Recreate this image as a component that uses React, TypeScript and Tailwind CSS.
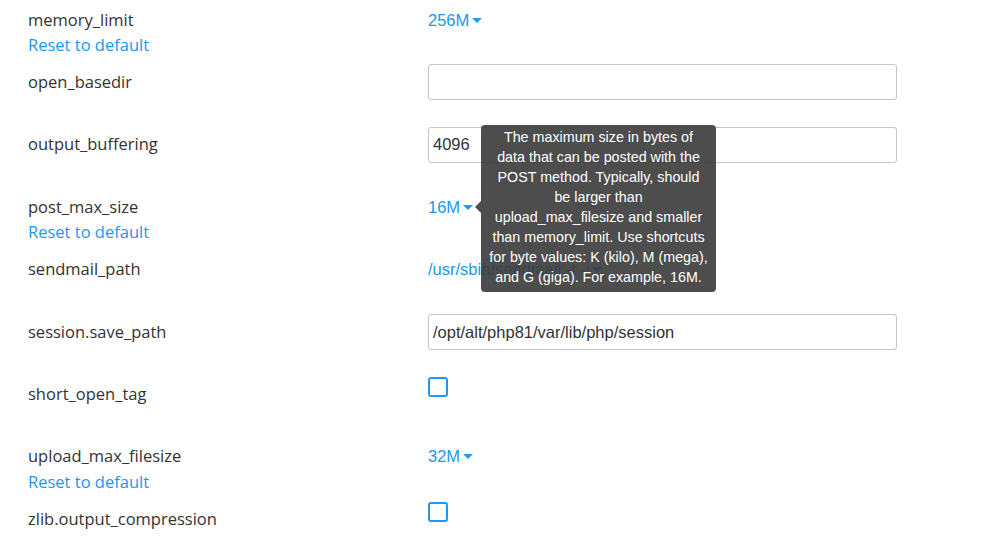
import React from "react";

type Row = {
  name: string;
  kind: "select" | "input" | "checkbox";
  value?: string;
  reset?: boolean;
};

const rows: Row[] = [
  { name: "memory_limit", kind: "select", value: "256M", reset: true },
  { name: "open_basedir", kind: "input", value: "" },
  { name: "output_buffering", kind: "input", value: "4096" },
  { name: "post_max_size", kind: "select", value: "16M", reset: true },
  { name: "sendmail_path", kind: "select", value: "/usr/sbin/sendmail -t -i" },
  { name: "session.save_path", kind: "input", value: "/opt/alt/php81/var/lib/php/session" },
  { name: "short_open_tag", kind: "checkbox" },
  { name: "upload_max_filesize", kind: "select", value: "32M", reset: true },
  { name: "zlib.output_compression", kind: "checkbox" },
];

const tipLines = [
  "The maximum size in bytes of",
  "data that can be posted with the",
  "POST method. Typically, should",
  "be larger than",
  "upload_max_filesize and smaller",
  "than memory_limit. Use shortcuts",
  "for byte values: K (kilo), M (mega),",
  "and G (giga). For example, 16M.",
];

const labelFont = { fontFamily: '"Open Sans", sans-serif' };
const valueFont = { fontFamily: '"Liberation Sans", Arial, sans-serif' };

function Caret() {
  return (
    <svg width="10" height="6" viewBox="0 0 10 6" className="ml-[3px] mt-[1px]">
      <path d="M0 0h10L5 5z" fill="#2196f3" />
    </svg>
  );
}

function Value({ row }: { row: Row }) {
  if (row.kind === "input") {
    return (
      <div className="flex h-9 w-[469px] items-center rounded-[3px] border border-[#c6c6c6] bg-white px-[4px] text-[16.5px] text-[#333]" style={valueFont}>
        {row.value}
      </div>
    );
  }
  if (row.kind === "checkbox") {
    return (
      <div className="flex h-9 items-start pt-[1px]">
        <div className="h-[20px] w-[20px] rounded-[3px] border-2 border-[#2196f3] bg-white" />
      </div>
    );
  }
  return (
    <div className="flex h-9 items-center text-[16.5px] text-[#2196f3]" style={valueFont}>
      <span>{row.value}</span>
      <Caret />
    </div>
  );
}

export default function App() {
  return (
    <div className="relative h-[553px] w-[1000px] overflow-hidden bg-white">
      <div className="flex flex-col">
        {rows.map((row) => (
          <div key={row.name} className="flex h-[62.4px] shrink-0 pt-[2px]">
            <div className="w-[428px] shrink-0 pl-[28px]" style={labelFont}>
              <div className="flex h-9 items-center text-[16.5px] text-[#333]">{row.name}</div>
              {row.reset && (
                <div className="-mt-[5px] text-[16.5px] leading-6 text-[#2196f3]">Reset to default</div>
              )}
            </div>
            <div className="flex-1">
              <Value row={row} />
            </div>
          </div>
        ))}
      </div>

      <div
        className="absolute left-[481px] top-[125px] w-[235px] rounded-[4px] bg-[#3a3a3a]/90 pb-[5px] pt-[2px] text-center text-[14.3px] leading-5 text-white"
        style={valueFont}
      >
        <div className="absolute -left-[6px] top-[76px] h-0 w-0 border-y-[6px] border-r-[6px] border-y-transparent border-r-[#3a3a3a]/90" />
        {tipLines.map((line) => (
          <div key={line} className="whitespace-nowrap">{line}</div>
        ))}
      </div>
    </div>
  );
}
